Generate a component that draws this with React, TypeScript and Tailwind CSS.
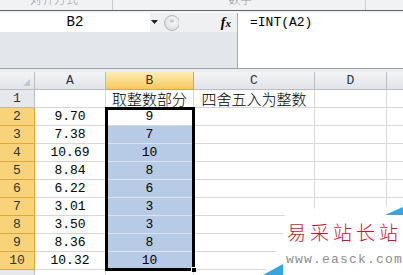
const cols = [
  { key: "A", w: "w-[71px]" },
  { key: "B", w: "w-[88px]" },
  { key: "C", w: "w-[121px]" },
  { key: "D", w: "w-[72px]" },
  { key: "", w: "w-[40px]" },
];

const rows: { a: string; b: string; c?: string }[] = [
  { a: "", b: "取整数部分", c: "四舍五入为整数" },
  { a: "9.70", b: "9" },
  { a: "7.38", b: "7" },
  { a: "10.69", b: "10" },
  { a: "8.84", b: "8" },
  { a: "6.22", b: "6" },
  { a: "3.01", b: "3" },
  { a: "3.50", b: "3" },
  { a: "8.36", b: "8" },
  { a: "10.32", b: "10" },
  { a: "", b: "" },
];

const mono = "font-['Liberation_Mono',monospace]";
const cjk = "font-['Noto_Sans_CJK_SC',sans-serif] font-light";

function FormulaBar() {
  return (
    <div className="flex h-[55px] bg-[#e3e6ea]">
      <div className="flex w-[237px] shrink-0 flex-col">
        <div className="flex h-[19px] items-center">
          <div
            className={`flex h-[19px] w-[150px] items-center justify-center bg-white text-[14px] text-black ${mono}`}
          >
            B2
          </div>
          <div className="flex h-[19px] flex-1 items-center bg-[#eef0f2]">
            <svg width="8" height="5" viewBox="0 0 8 5" className="ml-[1px]">
              <path d="M0 0 H7 L3.5 4 Z" fill="#222" />
            </svg>
            <svg width="16" height="18" viewBox="0 0 16 18" className="ml-[4px]">
              <defs>
                <radialGradient id="rb" cx="0.55" cy="0.4" r="0.6">
                  <stop offset="0" stopColor="#ffffff" />
                  <stop offset="1" stopColor="#d8dadd" />
                </radialGradient>
              </defs>
              <circle cx="9" cy="9" r="7.5" fill="url(#rb)" stroke="#b5b8bc" />
              <ellipse cx="9" cy="7" rx="2.5" ry="1.8" fill="#c9ccd0" />
            </svg>
            <span className="ml-auto mr-[6px] font-['Liberation_Serif',serif] text-[14px] font-bold italic leading-none text-black">
              f<span className="text-[11px]">x</span>
            </span>
          </div>
        </div>
        <div className="flex-1 bg-[#e3e6ea]" />
      </div>
      <div
        className={`flex-1 border-l border-[#a7abb0] bg-white pl-[12px] pt-[1px] text-[13px] leading-[18px] text-black ${mono}`}
      >
        =INT(A2)
      </div>
    </div>
  );
}

function HeaderRow() {
  return (
    <div className={`flex h-[18px] text-[13px] leading-[17px] text-[#333] ${mono}`}>
      <div className="relative w-[35px] shrink-0 border-r border-b border-[#b9bdc3] bg-gradient-to-b from-[#f3f4f6] to-[#e1e4e8]">
        <svg width="7" height="7" viewBox="0 0 7 7" className="absolute right-[4px] bottom-[3px]">
          <path d="M7 0 V7 H0 Z" fill="#c4c8cd" />
        </svg>
      </div>
      {cols.map((c, i) => (
        <div
          key={i}
          className={`${c.w} shrink-0 border-r border-b text-center ${
            c.key === "B"
              ? "border-[#d9a83e] bg-gradient-to-b from-[#fdeeb5] to-[#f6c85c]"
              : "border-[#b9bdc3] bg-gradient-to-b from-[#f3f4f6] to-[#e1e4e8]"
          }`}
        >
          {c.key}
        </div>
      ))}
    </div>
  );
}

function DataRow({ i, r }: { i: number; r: (typeof rows)[number] }) {
  const n = i + 1;
  const sel = n >= 2 && n <= 10;
  const blue = n >= 3 && n <= 10;
  return (
    <div className="flex h-[18px] text-[13px] leading-[17px] text-black">
      <div
        className={`w-[35px] shrink-0 border-r border-b text-center text-[#333] ${mono} ${
          sel ? "border-[#d9a83e] bg-[#f8d37a]" : "border-[#b9bdc3] bg-[#e6e8eb]"
        }`}
      >
        {n <= 10 ? n : ""}
      </div>
      <div className={`w-[71px] shrink-0 border-r border-b border-[#d8d8d8] text-center ${mono}`}>{r.a}</div>
      <div
        className={`w-[88px] shrink-0 border-r border-b text-center ${
          blue ? "border-[#dde4ef] bg-[#b8cbe6]" : "border-[#d8d8d8]"
        } ${n === 1 ? `${cjk} text-[15px] leading-[17px]` : mono}`}
      >
        {r.b}
      </div>
      <div
        className={`w-[121px] shrink-0 border-r border-b border-[#d8d8d8] text-center ${cjk} text-[15px] leading-[17px]`}
      >
        {r.c ?? ""}
      </div>
      <div className="w-[72px] shrink-0 border-r border-b border-[#d8d8d8]" />
      <div className="w-[40px] shrink-0 border-r border-b border-[#d8d8d8]" />
    </div>
  );
}

function Watermark() {
  return (
    <div className="absolute left-[255px] top-[203px] h-[72px] w-[148px]">
      <svg width="148" height="72" viewBox="0 0 148 72" className="absolute inset-0">
        <polygon points="30,6 148,3 148,72 8,72 28,38" fill="#ffffff" opacity="0.95" />
        <polygon points="130,12 148,4 148,12" fill="#3aa3dc" />
        <polygon points="8,72 28,61 28,72" fill="#3aa3dc" />
      </svg>
      <div
        className={`absolute left-[32px] top-[17px] whitespace-nowrap text-[19px] leading-[24px] tracking-[4px] text-[#c8142f] ${cjk}`}
      >
        易采站长站
      </div>
      <div
        className={`absolute left-[31px] top-[50px] whitespace-nowrap text-[13px] leading-[14px] tracking-[1.2px] text-[#8d8d8d] ${mono}`}
      >
        www.easck.com
      </div>
    </div>
  );
}

export default function App() {
  return (
    <div className="relative h-[275px] w-[403px] overflow-hidden bg-white">
      {/* ribbon leftovers, tops cut off by the window */}
      <div className="relative flex h-[10px] items-start overflow-hidden bg-[#f1f2f4]">
        <span className={`ml-[30px] -mt-[8px] text-[12px] leading-[14px] text-[#9a9a9a] ${cjk}`}>对齐方式</span>
        <div className="absolute left-[112px] top-0 h-[10px] border-l border-[#c9ccd0]" />
        <span className={`ml-[150px] -mt-[8px] text-[12px] leading-[14px] text-[#9a9a9a] ${cjk}`}>数字</span>
        <div className="absolute left-[365px] top-0 h-[10px] border-l border-[#c9ccd0]" />
      </div>
      <div className="h-[1px] bg-[#5f6266]" />
      <div className="h-[2px] bg-[#f4f5f6]" />
      <FormulaBar />
      <div className="h-[1px] bg-[#9aa0a6]" />
      <div className="h-[3px] bg-[#eceef1]" />
      <HeaderRow />
      {rows.map((r, i) => (
        <DataRow key={i} i={i} r={r} />
      ))}
      {/* selection B2:B10 */}
      <div className="absolute left-[105px] top-[107px] h-[164px] w-[90px] border-[3px] border-black" />
      <div className="absolute left-[191px] top-[267px] h-[6px] w-[6px] border border-white bg-black" />
      <Watermark />
    </div>
  );
}
